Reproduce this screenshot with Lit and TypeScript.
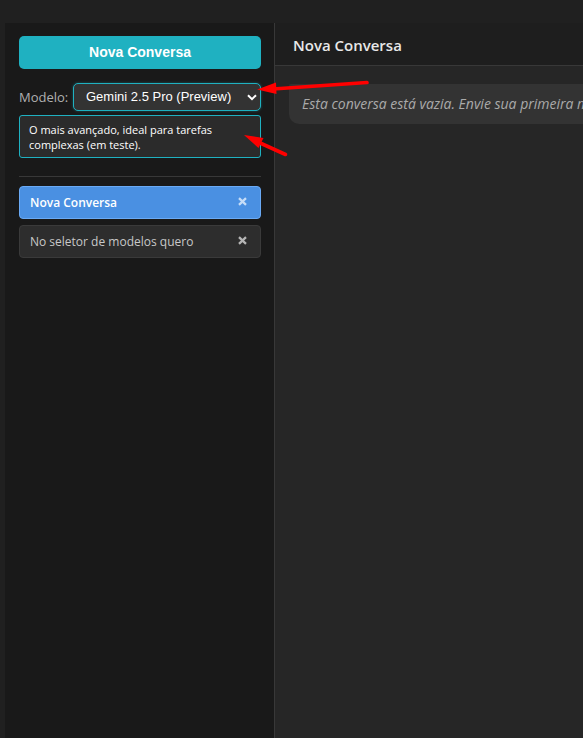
import { LitElement, html, css } from "lit";
import { customElement, state } from "lit/decorators.js";
import { classMap } from "lit/directives/class-map.js";

@customElement("app-root")
export class AppRoot extends LitElement {
  @state() private active = 0;

  private chats = ["Nova Conversa", "No seletor de modelos quero"];

  static styles = css`
    :host {
      display: block;
      position: relative;
      overflow: hidden;
      background: #202020;
      font-family: "Open Sans", "Noto Sans", sans-serif;
      color: #e8e8e8;
    }
    * {
      box-sizing: border-box;
    }
    .shell {
      display: flex;
      min-height: 100vh;
      padding: 23px 0 0 5px;
    }
    .sidebar {
      flex: 0 0 270px;
      padding: 13px 13px 0 14px;
      background: #191919;
      border-right: 1px solid #383838;
    }
    .new-chat {
      display: block;
      width: 100%;
      height: 33px;
      padding: 0 0 2px;
      border: 0;
      border-radius: 5px;
      background: #1fb1c1;
      color: #fff;
      font: bold 14px "Liberation Sans", sans-serif;
    }
    .model {
      display: flex;
      align-items: center;
      justify-content: space-between;
      margin-top: 14px;
      font-size: 13px;
      color: #b0b0b0;
    }
    .picker {
      position: relative;
      width: 188px;
    }
    .select {
      display: block;
      appearance: none;
      width: 100%;
      height: 28px;
      padding: 0 24px 1px 12px;
      border: 1px solid #1fb1c1;
      border-radius: 5px;
      outline: 0;
      box-shadow: 0 0 3px #1fb1c166;
      background: #333;
      color: #fff;
      font: 13px "Liberation Sans", sans-serif;
    }
    .chevron {
      position: absolute;
      right: 4px;
      top: 11px;
      width: 10px;
      height: 7px;
      pointer-events: none;
    }
    .hint {
      margin: 4px 0 0;
      padding: 6px 48px 5px 9px;
      border: 1px solid #1fb1c1;
      border-radius: 3px;
      background: #2b2b2b;
      color: #fff;
      font-size: 11px;
      line-height: 15px;
    }
    .chats {
      display: flex;
      flex-direction: column;
      gap: 6px;
      margin: 18px 0 0;
      padding: 9px 0 0;
      border-top: 1px solid #383838;
      list-style: none;
    }
    .chat {
      display: flex;
      height: 33px;
      border: 1px solid #3a3a3a;
      border-radius: 4px;
      background: #2d2d2d;
      color: #c8c8c8;
    }
    .chat.active {
      border-color: #6aaaf5;
      background: #4a90e2;
      color: #fff;
    }
    .open {
      flex: 1;
      padding: 0 0 0 10px;
      border: 0;
      background: none;
      color: inherit;
      font: 12px "Open Sans", sans-serif;
      text-align: left;
      white-space: nowrap;
    }
    .active .open {
      font-weight: 600;
    }
    .remove {
      width: 35px;
      padding: 0 0 3px;
      border: 0;
      background: none;
      color: #b5b5b5;
      line-height: 0;
    }
    .active .remove {
      color: #c5dcf7;
    }
    .main {
      flex: 1;
      min-width: 0;
      background: #262626;
    }
    .header {
      height: 43px;
      padding: 0 18px;
      border-bottom: 1px solid #383838;
      background: #1e1e1e;
    }
    .title {
      margin: 0;
      font-size: 15px;
      font-weight: 600;
      line-height: 44px;
    }
    .messages {
      padding: 18px 0 0 14px;
      overflow: hidden;
    }
    .message {
      margin: 0;
      padding: 0 0 0 13px;
      border-radius: 2px 0 0 10px;
      background: #333;
      color: #aaa;
      font-size: 14px;
      font-style: italic;
      line-height: 40px;
      white-space: nowrap;
    }
    .arrows {
      position: absolute;
      left: 239px;
      top: 76px;
      width: 136px;
      height: 84px;
      pointer-events: none;
    }
  `;

  render() {
    return html`
      <div class="shell">
        <aside class="sidebar">
          <button class="new-chat">Nova Conversa</button>
          <div class="model">
            <label for="model">Modelo:</label>
            <div class="picker">
              <select id="model" class="select" aria-describedby="hint">
                <option>Gemini 2.5 Pro (Preview)</option>
              </select>
              <svg class="chevron" viewBox="0 0 10 7" aria-hidden="true">
                <path d="M1 1.2 5 5.2 9 1.2" fill="none" stroke="#fff" stroke-width="2" />
              </svg>
            </div>
          </div>
          <p id="hint" class="hint">O mais avançado, ideal para tarefas complexas (em teste).</p>
          <ul class="chats">
            ${this.chats.map(
              (name, i) => html`
                <li class=${classMap({ chat: true, active: i === this.active })}>
                  <button class="open" @click=${() => (this.active = i)}>${name}</button>
                  <button class="remove" aria-label="Excluir">
                    <svg width="9" height="9" viewBox="0 0 9 9" aria-hidden="true">
                      <path d="M1 1.2 8 7.8M8 1.2 1 7.8" fill="none" stroke="currentColor" stroke-width="2.3" />
                    </svg>
                  </button>
                </li>
              `
            )}
          </ul>
        </aside>
        <main class="main">
          <header class="header"><h1 class="title">Nova Conversa</h1></header>
          <section class="messages">
            <p class="message">Esta conversa está vazia. Envie sua primeira m</p>
          </section>
        </main>
      </div>
      <svg class="arrows" viewBox="240 76 136 84" aria-hidden="true">
        <g fill="#f00" stroke="#f00">
          <path d="M274 89 368 82.5" stroke-width="3.6" stroke-linecap="round" />
          <path d="M258 89.5 277 82.5 277.500 94Z" stroke="none" />
          <path d="M260 142.5 286.500 154.500" stroke-width="3.6" stroke-linecap="round" />
          <path d="M245 135 264.500 138 259.500 148Z" stroke="none" />
        </g>
      </svg>
    `;
  }
}
